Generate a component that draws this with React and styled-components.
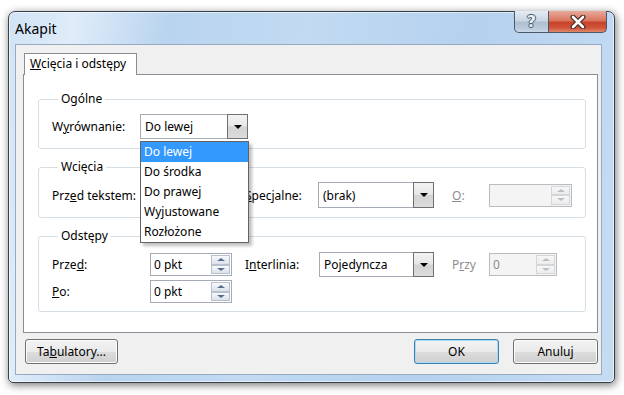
import React from 'react';
import styled, { createGlobalStyle, css } from 'styled-components';

const GlobalStyle = createGlobalStyle`
  html, body {
    margin: 0;
    background: #ffffff;
  }
  body {
    font-family: "Noto Sans", "Liberation Sans", sans-serif;
    font-size: 12px;
    color: #000;
  }
  * {
    box-sizing: border-box;
  }
`;

const Screen = styled.div`
  padding: 11px 0 0 8px;
  height: 395px;
`;

const Window = styled.div`
  width: 607px;
  height: 372px;
  border: 1px solid #3a4048;
  border-radius: 7px 7px 5px 5px;
  padding: 0 12px 7px 6px;
  display: flex;
  flex-direction: column;
  background: linear-gradient(
    100deg,
    #d0e3f6 0%,
    #dfecf9 10%,
    #b9d4ef 24%,
    #c2daf2 45%,
    #b5d1ee 70%,
    #c6dcf3 100%
  );
  box-shadow: 1px 2px 9px rgba(0, 0, 0, 0.55), inset 0 0 0 1px rgba(255, 255, 255, 0.55);
`;

const TitleBar = styled.div`
  height: 32px;
  display: flex;
  justify-content: space-between;
  align-items: flex-start;
`;

const Title = styled.div`
  font-size: 14px;
  line-height: 18px;
  padding-top: 8px;
  color: #000;
`;

const Caption = styled.div`
  display: flex;
  margin-top: -1px;
  margin-right: -5px;
`;

const CaptionButton = styled.div`
  height: 22px;
  display: flex;
  align-items: center;
  justify-content: center;
  border: 1px solid #4a5868;
  border-top: none;
  ${p => p.$close
    ? css`
        width: 58px;
        border-left: none;
        border-radius: 0 0 5px 0;
        background: linear-gradient(#e9a99a 0%, #d9765f 45%, #c7432a 55%, #d0553a 80%, #e0886c 100%);
      `
    : css`
        width: 35px;
        border-radius: 0 0 0 5px;
        background: linear-gradient(#e4ecf4 0%, #c9d6e3 45%, #aebfd1 55%, #b8c9da 80%, #cad8e6 100%);
      `}
`;

const HelpGlyph = styled.span`
  font-family: "DejaVu Sans", sans-serif;
  font-size: 16px;
  font-weight: bold;
  line-height: 1;
  color: #e9eef4;
  text-shadow: 1px 0 0 #46586b, -1px 0 0 #46586b, 0 1px 0 #46586b, 0 -1px 0 #46586b;
`;

const Client = styled.div`
  flex: 1;
  background: #f0f0f0;
  border: 1px solid #97aac1;
  padding: 8px 4px 0 7px;
  display: flex;
  flex-direction: column;
`;

const TabStrip = styled.div`
  display: flex;
  padding-left: 1px;
`;

const Tab = styled.div`
  width: 113px;
  height: 22px;
  margin-bottom: -1px;
  border: 1px solid #898c95;
  border-bottom: none;
  background: #fff;
  padding-left: 5px;
  line-height: 20px;
  position: relative;
  z-index: 1;
`;

const Key = styled.span`
  text-decoration: underline;
`;

const Panel = styled.div`
  width: 575px;
  height: 259px;
  background: #fff;
  border: 1px solid #898c95;
  padding: 16px 11px 0 14px;
  display: flex;
  flex-direction: column;
  gap: 10px;
`;

const Group = styled.fieldset`
  margin: 0;
  min-inline-size: 0;
  border: 1px solid #d5dfe5;
  border-radius: 3px;
  padding: ${p => p.$pad};
  display: flex;
  flex-direction: column;
  gap: 3px;
`;

const Legend = styled.legend`
  margin-left: 6px;
  padding: 0 3px;
  line-height: 16px;
`;

const Row = styled.div`
  display: flex;
  align-items: center;
  height: ${p => p.$h}px;
`;

const FieldLabel = styled.label`
  flex-shrink: 0;
  width: ${p => p.$w}px;
  margin-left: ${p => p.$ml || 0}px;
  color: ${p => (p.$disabled ? '#8d8d8d' : '#000')};
`;

const ComboWrap = styled.div`
  position: relative;
  flex-shrink: 0;
`;

const ComboBox = styled.div`
  display: flex;
  width: ${p => p.$w}px;
  height: ${p => p.$h}px;
  border: 1px solid #a5acb5;
  background: #fff;
`;

const ComboText = styled.div`
  flex: 1;
  display: flex;
  align-items: center;
  padding-left: 4px;
`;

const DropButton = styled.div`
  width: 21px;
  margin: -1px -1px -1px 0;
  border: 1px solid #707070;
  background: linear-gradient(#f3f3f3 0%, #e6e6e6 48%, #d3d3d3 52%, #dcdcdc 100%);
  display: flex;
  align-items: center;
  justify-content: center;
`;

const Arrow = styled.span`
  width: 0;
  height: 0;
  border-left: 4px solid transparent;
  border-right: 4px solid transparent;
  border-top: 4px solid #000;
`;

const DropList = styled.ul`
  position: absolute;
  left: 0;
  top: calc(100% + 2px);
  width: 109px;
  margin: 0;
  padding: 0;
  list-style: none;
  background: #fff;
  border: 1px solid #646464;
  box-shadow: 3px 3px 3px rgba(0, 0, 0, 0.25);
  z-index: 5;
`;

const DropItem = styled.li`
  height: 20px;
  line-height: 19px;
  padding-left: 3px;
  background: ${p => (p.$active ? '#3399ff' : 'transparent')};
  color: ${p => (p.$active ? '#fff' : '#000')};
`;

const SpinBox = styled.div`
  flex-shrink: 0;
  display: flex;
  width: ${p => p.$w}px;
  height: ${p => p.$h}px;
  border: 1px solid ${p => (p.$disabled ? '#b8bcc0' : '#a5acb5')};
  background: ${p => (p.$disabled ? '#f4f4f4' : '#fff')};
  color: ${p => (p.$disabled ? '#8d8d8d' : '#000')};
`;

const SpinValue = styled.div`
  flex: 1;
  display: flex;
  align-items: center;
  padding-left: 3px;
`;

const SpinButtons = styled.div`
  width: 19px;
  margin: 1px;
  display: flex;
  flex-direction: column;
`;

const SpinHalf = styled.div`
  flex: 1;
  display: flex;
  align-items: center;
  justify-content: center;
  border: 1px solid ${p => (p.$disabled ? '#d4d7da' : '#b7c0cc')};
  background: ${p => (p.$disabled
    ? 'linear-gradient(#f7f7f7, #ececec)'
    : 'linear-gradient(#f8fafc 0%, #e9eef4 50%, #dbe2ea 100%)')};
`;

const SpinArrow = styled.span`
  width: 0;
  height: 0;
  border-left: 4px solid transparent;
  border-right: 4px solid transparent;
  ${p => (p.$up ? 'border-bottom' : 'border-top')}: 3px solid ${p => (p.$disabled ? '#b9bec4' : '#5a6c8c')};
`;

const Footer = styled.div`
  display: flex;
  align-items: center;
  margin-right: -4px;
  padding: 6px 3px 0 2px;
  gap: 14px;
`;

const Button = styled.button`
  width: ${p => p.$w}px;
  height: 25px;
  padding: 0;
  font: inherit;
  color: #000;
  border: 1px solid #707070;
  border-radius: 3px;
  background: linear-gradient(#f2f2f2 0%, #ebebeb 50%, #dddddd 51%, #cfcfcf 100%);
  box-shadow: inset 0 0 0 1px #fbfbfb;
  ${p => p.$push && 'margin-left: auto;'}
  ${p => p.$default && css`
    border-color: #3c7fb1;
    box-shadow: inset 0 0 0 1px #a8dbf6;
  `}
`;

const Combo = ({ w, h, value, children }) => (
  <ComboWrap>
    <ComboBox $w={w} $h={h}>
      <ComboText>{value}</ComboText>
      <DropButton><Arrow /></DropButton>
    </ComboBox>
    {children}
  </ComboWrap>
);

const Spin = ({ w, h, value, disabled }) => (
  <SpinBox $w={w} $h={h} $disabled={disabled}>
    <SpinValue>{value}</SpinValue>
    <SpinButtons>
      <SpinHalf $disabled={disabled}><SpinArrow $up $disabled={disabled} /></SpinHalf>
      <SpinHalf $disabled={disabled}><SpinArrow $disabled={disabled} /></SpinHalf>
    </SpinButtons>
  </SpinBox>
);

const alignments = ['Do lewej', 'Do środka', 'Do prawej', 'Wyjustowane', 'Rozłożone'];

export default function App() {
  return (
    <>
      <GlobalStyle />
      <Screen>
        <Window>
          <TitleBar>
            <Title>Akapit</Title>
            <Caption>
              <CaptionButton>
                <HelpGlyph>?</HelpGlyph>
              </CaptionButton>
              <CaptionButton $close>
                <svg width="16" height="14" viewBox="0 0 16 14">
                  <path d="M3 2 L13 12 M13 2 L3 12" stroke="#4a2a22" strokeWidth="5" strokeLinecap="round" />
                  <path d="M3 2 L13 12 M13 2 L3 12" stroke="#ffffff" strokeWidth="2.6" strokeLinecap="round" />
                </svg>
              </CaptionButton>
            </Caption>
          </TitleBar>
          <Client>
            <TabStrip>
              <Tab><Key>W</Key>cięcia i odstępy</Tab>
            </TabStrip>
            <Panel>
              <Group $pad="7px 12px 9px 13px">
                <Legend>Ogólne</Legend>
                <Row $h={25}>
                  <FieldLabel $w={88}>W<Key>y</Key>równanie:</FieldLabel>
                  <Combo w={108} h={25} value="Do lewej">
                    <DropList>
                      {alignments.map((a, i) => (
                        <DropItem key={a} $active={i === 0}>{a}</DropItem>
                      ))}
                    </DropList>
                  </Combo>
                </Row>
              </Group>
              <Group $pad="7px 12px 9px 13px">
                <Legend>Wcięcia</Legend>
                <Row $h={26}>
                  <FieldLabel $w={98}>Prz<Key>e</Key>d tekstem:</FieldLabel>
                  <Spin w={82} h={23} value="" />
                  <FieldLabel $w={73} $ml={13}><Key>S</Key>pecjalne:</FieldLabel>
                  <Combo w={116} h={26} value="(brak)" />
                  <FieldLabel $w={37} $ml={18} $disabled><Key>O</Key>:</FieldLabel>
                  <Spin w={83} h={23} value="" disabled />
                </Row>
              </Group>
              <Group $pad="8px 12px 8px 13px">
                <Legend>Odstępy</Legend>
                <Row $h={25}>
                  <FieldLabel $w={98}>Prze<Key>d</Key>:</FieldLabel>
                  <Spin w={82} h={23} value="0 pkt" />
                  <FieldLabel $w={74} $ml={13}>I<Key>n</Key>terlinia:</FieldLabel>
                  <Combo w={115} h={25} value="Pojedyncza" />
                  <FieldLabel $w={37} $ml={18} $disabled>P<Key>r</Key>zy</FieldLabel>
                  <Spin w={68} h={23} value="0" disabled />
                </Row>
                <Row $h={23}>
                  <FieldLabel $w={98}><Key>P</Key>o:</FieldLabel>
                  <Spin w={82} h={23} value="0 pkt" />
                </Row>
              </Group>
            </Panel>
            <Footer>
              <Button $w={93}>Ta<Key>b</Key>ulatory...</Button>
              <Button $w={85} $push $default>OK</Button>
              <Button $w={85}>Anuluj</Button>
            </Footer>
          </Client>
        </Window>
      </Screen>
    </>
  );
}
